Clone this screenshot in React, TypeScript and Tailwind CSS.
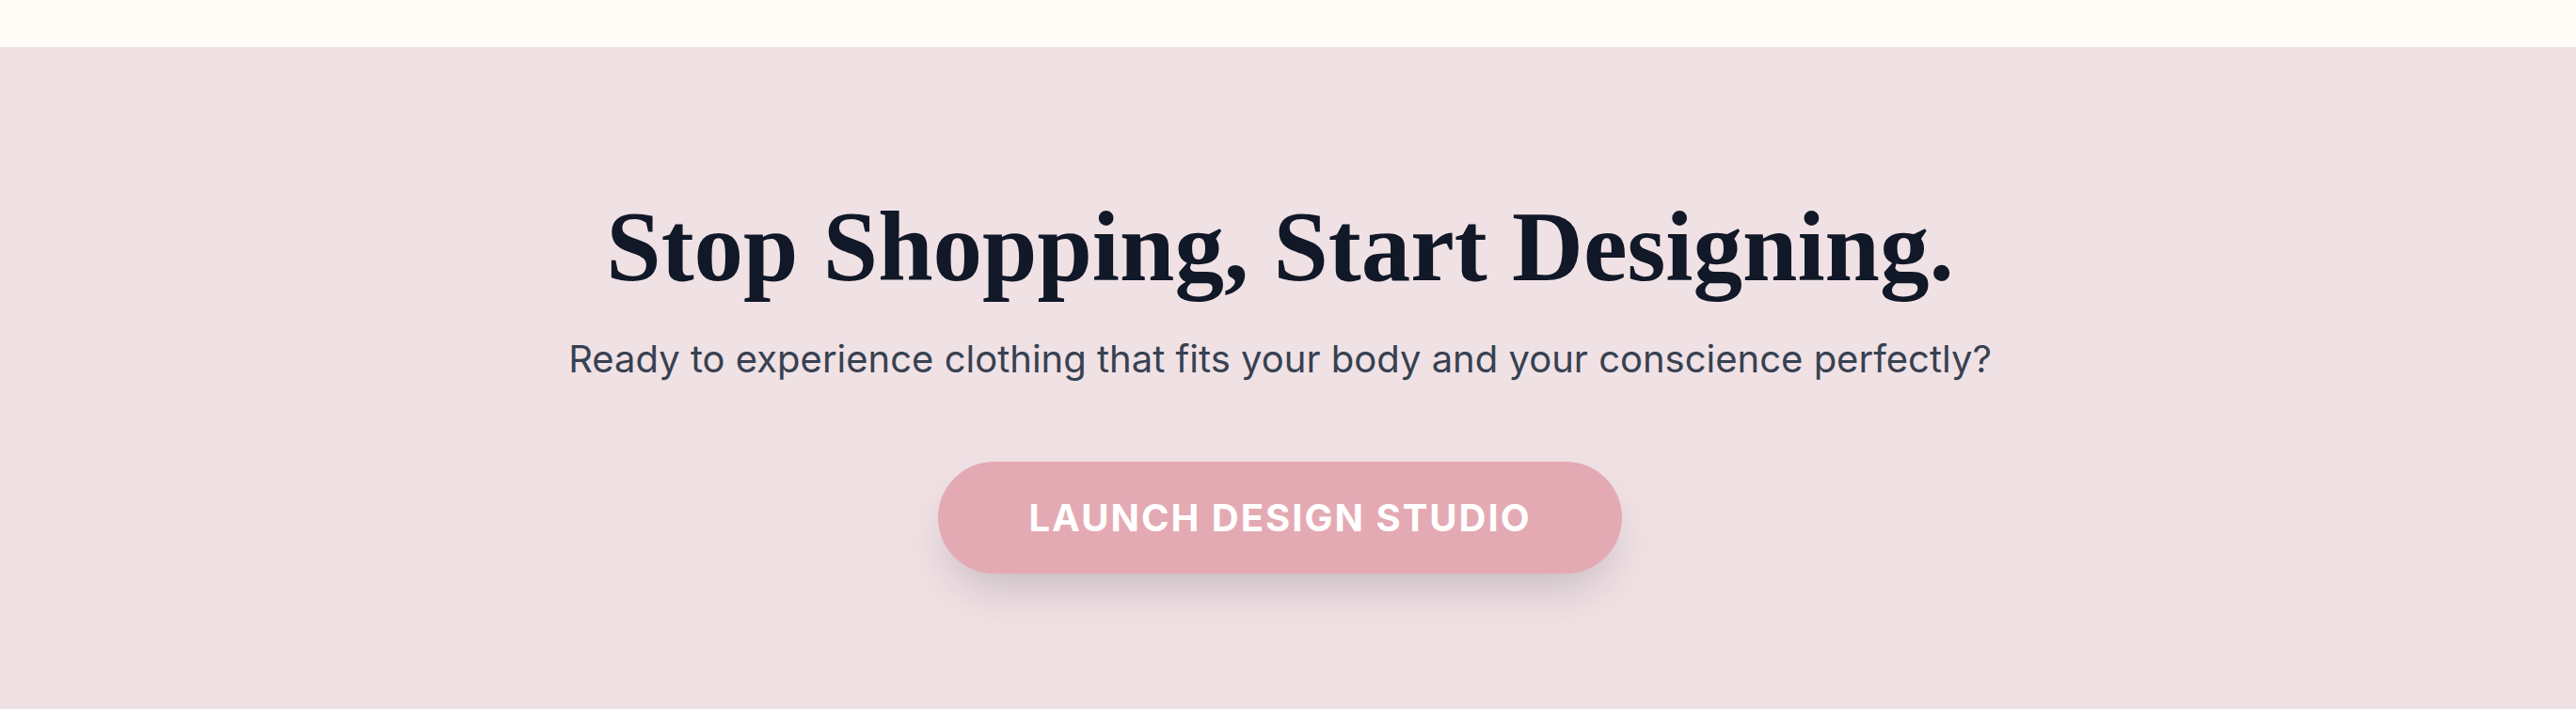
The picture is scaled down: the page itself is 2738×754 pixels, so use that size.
export default function App() {
  return (
    <div className="w-full min-h-[754px] bg-[#f0e1e5]">
      <div className="h-[50px] bg-[#fdfcf7]" />
      <section className="flex flex-col items-center pt-[160px] pb-[120px] pr-[17px]">
        <h1
          className="text-[105px] leading-none font-bold text-[#111827]"
          style={{ fontFamily: '"Liberation Serif", "DejaVu Serif", serif' }}
        >
          Stop Shopping, Start Designing.
        </h1>
        <p
          className="mt-[37px] text-[40px] leading-[60px] text-[#374151]"
          style={{ fontFamily: 'Inter, "Liberation Sans", sans-serif' }}
        >
          Ready to experience clothing that fits your body and your conscience perfectly?
        </p>
        <button
          className="mt-[79px] h-[119px] w-[727px] rounded-full bg-[#e4aab4] text-white text-[40px] font-bold tracking-[0.05em] uppercase shadow-[0_25px_50px_-12px_rgba(0,0,0,0.18)]"
          style={{ fontFamily: 'Inter, "Liberation Sans", sans-serif' }}
        >
          Launch Design Studio
        </button>
      </section>
    </div>
  );
}
